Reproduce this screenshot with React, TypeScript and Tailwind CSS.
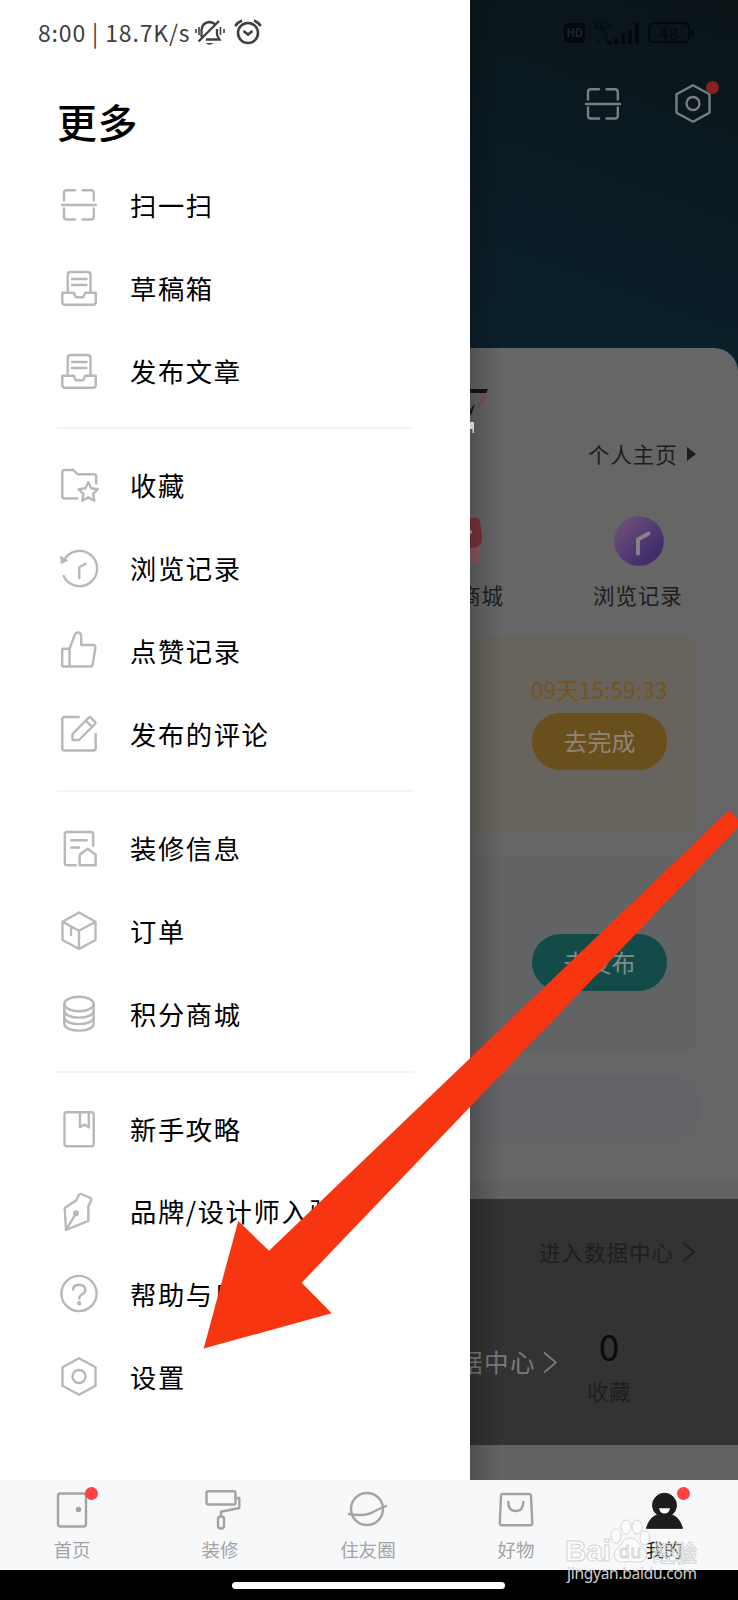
import type { ReactNode } from "react";

const HEX = "M20 1.2 L36.5 10.2 V28.8 L20 37.8 L3.5 28.8 V10.2 Z";

const icons: Record<string, ReactNode> = {
  scan: (
    <>
      <path d="M5 15.5 V8 Q5 5.3 7.7 5.3 H16 M23.5 5.3 H32 Q34.8 5.3 34.8 8 V15.5" />
      <path d="M5 23.5 V31.8 Q5 34.5 7.7 34.5 H16 M23.5 34.5 H32 Q34.8 34.5 34.8 31.8 V23.5 M3 20 H37" />
    </>
  ),
  inbox: (
    <>
      <path d="M8.7 24 V7 Q8.7 4 11.7 4 H28.5 Q31.5 4 31.5 7 V24 M13 11 H27.5 M13 17 H27.5" />
      <path d="M3.3 24.7 H14.8 L16.8 29.2 H24.2 L26.2 24.7 H36.8 V34 Q36.8 36.8 34 36.8 H6 Q3.3 36.8 3.3 34 Z" />
    </>
  ),
  folder: (
    <>
      <path d="M18.5 32.5 H5.5 Q3.3 32.5 3.3 30.3 V6 Q3.3 4 5.3 4 H14.5 L18.5 8.3 H35 Q37.2 8.3 37.2 10.5 V17.5" />
      <path d="M29.3 16.2 L32.2 22.3 L39 23.2 L34 27.8 L35.3 34.8 L29.3 31.4 L23.2 34.8 L24.5 27.8 L19.5 23.2 L26.4 22.3 Z" />
    </>
  ),
  history: (
    <>
      <path d="M4.6 28 A17.6 17.6 0 1 0 5 12.2" />
      <path d="M2 8.5 L8.5 12.5 L2.5 15.5 Z" fill="currentColor" strokeWidth="1" />
      <path d="M26.5 15.7 L20.3 19.3 V30" />
    </>
  ),
  like: (
    <path d="M4.5 17.7 H10.5 V35.5 H4.5 Q3.2 35.5 3.2 34 V19 Q3.2 17.7 4.5 17.7 Z M10.5 17.7 L15 6 Q16.5 1.2 19 1.4 Q22.2 1.7 22.2 5 V14 H34 Q36.8 14 36.3 17 L33.8 33 Q33.4 35.5 31 35.5 H10.5" />
  ),
  edit: (
    <>
      <path d="M19.7 3 H5.5 Q3.3 3 3.3 5.2 V34.3 Q3.3 36.5 5.5 36.5 H34.5 Q36.7 36.5 36.7 34.3 V20" />
      <path d="M13.5 26 V20 L29.7 3.7 Q30.8 2.8 31.8 3.7 L36 7.8 Q37 9 36 10 L20 26 Z M27 6.8 L33 12.8" />
    </>
  ),
  house: (
    <>
      <path d="M34.2 16.7 V5.2 Q34.2 3 32 3 H8 Q5.8 3 5.8 5.2 V34 Q5.8 36.3 8 36.3 H16.7 M12.3 11.3 H27.7 M12.3 18.5 H20" />
      <path d="M20.7 36.3 V25.8 L28.7 19.8 L36.7 25.8 V36.3 Z" />
    </>
  ),
  box: (
    <path d="M20 1.5 L36.5 10.7 V29 L20 38 L3.5 29 V10.7 Z M3.5 10.7 L20 19.8 L36.5 10.7 M20 19.8 V38 M12 15.5 V24" />
  ),
  coins: (
    <>
      <ellipse cx="20" cy="10" rx="14.7" ry="7.2" />
      <path d="M5.3 10 V29.5 C5.3 39 34.7 39 34.7 29.5 V10" />
      <path d="M5.3 16.5 C5.3 26 34.7 26 34.7 16.5 M5.3 23 C5.3 32.5 34.7 32.5 34.7 23" />
    </>
  ),
  book: (
    <>
      <rect x="5.5" y="3.2" width="29.2" height="34" rx="2.2" />
      <path d="M21 3.2 V18.3 L25.4 15.5 L29.8 18.3 V3.2" />
    </>
  ),
  pen: (
    <>
      <path d="M7 37.8 L5.7 16 L17 8.5 L20 2.8 Q20.8 1.5 22.3 2 L31.5 6 Q32.8 6.8 32.2 8 L29.3 14.5 V29 Z M7 37.8 L17 21.3" />
      <circle cx="17" cy="21.3" r="1.8" fill="currentColor" />
    </>
  ),
  help: (
    <>
      <circle cx="20" cy="19.5" r="17.6" />
      <path d="M14 15.5 Q14.5 10.8 20 10.8 Q26.3 11 26.3 16 Q26.3 18.7 23 20.5 Q20.2 22 20.2 24.5" />
      <circle cx="20.2" cy="29.3" r="1" fill="currentColor" />
    </>
  ),
  settings: (
    <>
      <path d={HEX} />
      <circle cx="20" cy="19.5" r="6.5" />
    </>
  ),
};

function Icon({ name, className }: { name: string; className?: string }) {
  return (
    <svg
      viewBox="0 0 40 40"
      fill="none"
      stroke="currentColor"
      strokeWidth="2.4"
      strokeLinecap="round"
      strokeLinejoin="round"
      className={`size-10 shrink-0 overflow-visible ${className ?? ""}`}
    >
      {icons[name]}
    </svg>
  );
}

const groups = [
  [
    ["scan", "扫一扫"],
    ["inbox", "草稿箱"],
    ["inbox", "发布文章"],
  ],
  [
    ["folder", "收藏"],
    ["history", "浏览记录"],
    ["like", "点赞记录"],
    ["edit", "发布的评论"],
  ],
  [
    ["house", "装修信息"],
    ["box", "订单"],
    ["coins", "积分商城"],
  ],
  [
    ["book", "新手攻略"],
    ["pen", "品牌/设计师入驻"],
    ["help", "帮助与反馈"],
    ["settings", "设置"],
  ],
];

function Drawer() {
  return (
    <aside className="w-[470px] shrink-0 bg-white">
      <div className="flex h-[65px] items-center pl-[38px] text-[#3f3f3f]">
        <span className="w-[155px] pb-[1px] text-[23px] tracking-[0.85px] whitespace-nowrap">8:00 | 18.7K/s</span>
        <svg width="32" height="28" viewBox="0 0 32 28" fill="none" stroke="currentColor" strokeWidth="2" className="-mt-[2px]">
          <path d="M8.5 19 V12 Q9 5 16 4 Q20 4 22 6.5 M24 11 V17 L26.5 21.5 H13 M5.5 23.5 L26 3" strokeWidth="2.3" />
          <path d="M12.5 25 H20.5 Q16.5 28.5 12.5 25 Z" fill="currentColor" stroke="none" />
          <path d="M3 11 V15 M6 9 V17 M27.5 9 V17 M31 11 V15" strokeWidth="1.6" />
        </svg>
        <svg width="28" height="28" viewBox="0 0 28 28" fill="none" stroke="currentColor" strokeWidth="2.6" className="-mt-[2px] ml-[9px]">
          <circle cx="14" cy="15" r="10" />
          <path d="M9.5 13 L14 16.5 L18.5 13 M1.2 8 Q4 4 8 2.5 M26.8 8 Q24 4 20 2.5" />
        </svg>
      </div>
      <h1 className="flex h-[99px] items-center pl-[57px] pt-[13px] text-[40px] font-medium tracking-[0.5px] text-black">更多</h1>
      <nav>
        {groups.map((group, i) => (
          <div key={i}>
            {i > 0 && <div className="my-[15px] ml-[57px] h-[2px] w-[357px] bg-[#f4f4f4]" />}
            {group.map(([icon, label]) => (
              <div key={label} className="flex h-[82.75px] items-center pl-[59px]">
                <Icon name={icon} className="text-[#b8b8b8]" />
                <span className="-mt-[1px] ml-[31px] text-[26.3px] tracking-[1.6px] whitespace-nowrap text-black">{label}</span>
              </div>
            ))}
          </div>
        ))}
      </nav>
    </aside>
  );
}

function StatusIcons() {
  return (
    <div className="flex h-[65px] items-center pl-[94px] text-[#03090c]">
      <span className="flex h-5 w-[21px] items-center justify-center rounded-[4px] bg-[#03090c] text-[11px] font-bold text-[#1c272d]">HD</span>
      <svg width="48" height="24" viewBox="0 0 48 24" fill="currentColor" className="ml-2 overflow-visible">
        <text x="1" y="9" fontSize="10" className="font-medium">4G+</text>
        <text x="1" y="21" fontSize="8">↓↑</text>
        <path d="M14 20 h5 v3 h-5z M21 17 h4 v6 h-4z M28 13 h4 v10 h-4z M35 9 h4 v14 h-4z M42 2 h4 v21 h-4z" />
      </svg>
      <span className="ml-[7px] flex h-[21px] w-[42px] items-center justify-center rounded-[6px] border-[2.5px] border-current text-[16px] font-medium tracking-[0.5px]">48</span>
      <span className="ml-[1px] h-[6px] w-[3px] bg-current" />
    </div>
  );
}

function Chevron({ className }: { className: string }) {
  return (
    <svg viewBox="0 0 14 22" fill="none" stroke="currentColor" strokeWidth="1.8" className={className}>
      <path d="M1 1 L13 11 L1 21" />
    </svg>
  );
}

// Profile page behind the drawer, dimmed by the scrim
function Profile() {
  return (
    <main className="relative w-[268px] shrink-0 overflow-hidden bg-[linear-gradient(200deg,#0b1417_0px,#0a1920_150px,#0b202b_380px)]">
      <StatusIcons />
      <div className="flex h-[283px] pl-[113px] pt-[19px] text-[#797e81]">
        <Icon name="scan" />
        <div className="relative ml-[50px] h-10">
          <Icon name="settings" />
          <span className="absolute -top-[3px] left-[33px] size-[13px] rounded-full bg-[#8a2021]" />
        </div>
      </div>

      <section className="h-[851px] rounded-tr-[24px] bg-[#666] text-[#1d1d1d]">
        <div className="flex h-[84px] pt-[40px]">
          <svg width="20" height="45" viewBox="0 0 20 45">
            <path d="M16.5 3 L8 20" fill="none" stroke="#8b4a55" strokeWidth="2.5" strokeDasharray="4 1" />
            <path d="M0 1 H18 L16 5 H0 Z M0 23 Q2 18 5 16 L1 27 H0Z" fill="#141414" />
            <path d="M0 34 H4 V45 H2.5 V41 H0Z" fill="#fff" />
          </svg>
        </div>
        <div className="flex h-[44px] items-center pl-[118px] text-[21.5px] tracking-[0.9px]">
          个人主页
          <span className="ml-[9px] h-0 w-0 border-y-[7px] border-l-[9px] border-y-transparent border-l-[#1d1d1d]" />
        </div>
        <div className="flex h-[159px] pt-[40px] text-[21.5px] leading-[30px] tracking-[0.9px] whitespace-nowrap">
          <div className="flex w-[34px] flex-col items-end">
            <svg width="34" height="50" viewBox="0 0 34 50">
              <path d="M0 27 H10 V44 Q9 47 6 47 H0Z" fill="#8d5860" />
              <path d="M0 2 H6 Q9 2 10 5 L12 21 Q13 32 0 32 Z" fill="#7a333b" />
              <circle cx="0" cy="16" r="2" fill="#aaa" />
            </svg>
            <span className="mt-[14px]">积分商城</span>
          </div>
          <div className="ml-[89px] flex flex-col items-center">
            <svg width="50" height="50" viewBox="0 0 50 50" className="ml-[2px]">
              <defs>
                <linearGradient id="clock" x1="0" y1="0" x2="1" y2="1">
                  <stop offset="0.1" stopColor="#6c4e78" />
                  <stop offset="1" stopColor="#34246b" />
                </linearGradient>
              </defs>
              <circle cx="25" cy="25" r="24.8" fill="url(#clock)" />
              <path d="M34.5 17.5 L24 23.5 V37.5" fill="none" stroke="#858189" strokeWidth="4" strokeLinecap="round" />
            </svg>
            <span className="mt-[14px]">浏览记录</span>
          </div>
        </div>

        <div className="flex h-[196px] w-[227px] flex-col rounded-r-[14px] bg-[#66645d] pl-[61px] pt-[39px]">
          <span className="h-[39px] text-[22.5px] leading-[30px] tracking-[0.15px] whitespace-nowrap text-[#77531a]">09天15:59:33</span>
          <button className="ml-[1px] h-[57px] w-[135px] rounded-full bg-[#694f1c] pb-[1px] text-[24px] text-[#8d8577]">去完成</button>
        </div>
        <div className="mt-[25px] h-[196px] w-[227px] rounded-r-[14px] bg-[#616365] pl-[62px] pt-[78px]">
          <button className="h-[57px] w-[135px] rounded-full bg-[#134b49] pb-[1px] text-[24px] text-[#7c8f8d]">去发布</button>
        </div>
        <div className="mt-[23px] h-[67px] w-[231px] rounded-r-full bg-[#626467]" />
        <div className="mt-[38px] h-[19px] bg-[#626262]" />
      </section>

      <section className="h-[246px] bg-[#333] text-[#1e1e1e]">
        <div className="flex items-center pl-[69px] pt-[36px] text-[21.5px] leading-[34px] tracking-[1px]">
          进入数据中心
          <Chevron className="ml-[8px] h-[20px] w-[13px]" />
        </div>
        <div className="flex pt-[49px]">
          <div className="flex w-[88px] items-center justify-end text-[24.5px] leading-[34px] tracking-[1.5px] text-[#7b7b7b]">
            <span className="whitespace-nowrap">进入数据中心</span>
            <Chevron className="ml-[7px] mr-[1px] h-[23px] w-[14px] shrink-0" />
          </div>
          <div className="ml-[29px] flex flex-col items-center">
            <span className="h-[58px] text-[37px] leading-[54px] text-[#0b0b0b]">0</span>
            <span className="text-[21.5px] leading-[30px] tracking-[0.5px]">收藏</span>
          </div>
        </div>
      </section>
      <section className="h-[35px] bg-[#636363]" />
      <div className="absolute inset-y-0 left-0 w-[32px] bg-gradient-to-r from-black/20 to-transparent" />
    </main>
  );
}

const tabs = [
  {
    label: "首页",
    dot: true,
    icon: (
      <>
        <rect x="6" y="3.5" width="28" height="33" rx="2.5" />
        <circle cx="26.5" cy="19.5" r="1.6" fill="currentColor" />
      </>
    ),
  },
  {
    label: "装修",
    icon: <path d="M8.5 1.3 H34 Q35.5 1.3 35.5 3 V12.5 Q35.5 14.5 34 14.5 H8.5 Q6.5 14.5 6.5 12.5 V3 Q6.5 1.3 8.5 1.3 Z M35.5 8 H39.3 V18 L21 21.7 V26.5 M21 26.5 Q24 26.5 24 29 V36 Q24 38.5 21 38.5 Q18 38.5 18 36 V29 Q18 26.5 21 26.5 Z" />,
  },
  {
    label: "住友圈",
    icon: (
      <>
        <circle cx="19" cy="19" r="16" />
        <path d="M1 24 Q17 27 26 21.5 Q32 18.5 38 16" />
      </>
    ),
  },
  {
    label: "好物",
    icon: <path d="M6.5 4 H33 Q34.8 4 35 6 L36.3 33 Q36.3 35.3 34 35.3 H6 Q3.7 35.3 3.8 33 L5 6 Q5 4 6.5 4 Z M12.3 12 Q12.3 21 19.8 21 Q27.3 21 27.3 12" />,
  },
  {
    label: "我的",
    dot: true,
    active: true,
    icon: (
      <>
        <path d="M2.5 38 Q6 26.5 13.5 25 A12 12 0 1 1 27.5 25 Q35 26.5 38.5 38 Z" fill="currentColor" strokeWidth="1" />
        <path d="M15 18.2 H26 Q25 23.5 20.5 23.5 Q16 23.5 15 18.2 Z" fill="#fff" stroke="none" />
      </>
    ),
  },
];

function TabBar() {
  return (
    <nav className="flex h-[90px] justify-between bg-[#f7f8fa] pl-[35px] pr-[37px] pt-[10px]">
      {tabs.map((tab) => (
        <div
          key={tab.label}
          className={`relative flex w-[74px] flex-col items-center ${tab.active ? "text-[#1d1d1d]" : "text-[#a3a3a3]"}`}
        >
          <svg viewBox="0 0 40 40" fill="none" stroke="currentColor" strokeWidth="2.4" strokeLinejoin="round" strokeLinecap="round" className="size-10 overflow-visible">
            {tab.icon}
          </svg>
          <span className="mt-[5px] text-[18.5px] leading-[28px] whitespace-nowrap">{tab.label}</span>
          {tab.dot && <span className="absolute -top-[3px] left-[50px] size-[13px] rounded-full bg-[#ff4141]" />}
        </div>
      ))}
    </nav>
  );
}

function Watermark() {
  return (
    <svg width="140" height="70" viewBox="0 0 140 70" className="absolute left-[562px] top-[1516px]">
      <g fill="#fff" fillOpacity="0.6" stroke="#d4d4d4" strokeWidth="1">
        <text x="3" y="45" fontSize="30" textLength="46" className="font-['Liberation_Sans'] font-bold">Bai</text>
        <ellipse cx="54" cy="20" rx="5" ry="7" />
        <ellipse cx="64" cy="11" rx="5" ry="7" />
        <ellipse cx="75" cy="11" rx="5" ry="7" />
        <ellipse cx="83" cy="22" rx="5" ry="7" />
        <path d="M68 22 Q74 22 78 29 Q86 35 84 41 Q82 47 74 46 Q68 45 62 46 Q54 47 52 40 Q52 34 59 29 Q62 22 68 22 Z" />
        <text x="57" y="42" fontSize="19" textLength="22" className="font-['Liberation_Sans']">du</text>
        <text x="91" y="45" fontSize="22" textLength="44" fillOpacity="0.2" className="font-bold">经验</text>
      </g>
      <text x="5" y="63" fontSize="15.5" textLength="130" fill="#d0d0d0" className="font-['Noto_Sans']">jingyan.baidu.com</text>
    </svg>
  );
}

export default function App() {
  return (
    <div className="relative h-[1600px] w-[738px] overflow-hidden bg-black font-['Noto_Sans_CJK_SC',sans-serif]">
      <div className="flex h-[1480px] overflow-hidden">
        <Drawer />
        <Profile />
      </div>
      <TabBar />
      <div className="flex h-[30px] items-center justify-center pr-[1px]">
        <span className="h-[7px] w-[273px] rounded-full bg-white" />
      </div>

      {/* Pointer to the settings entry */}
      <svg width="738" height="1600" viewBox="0 0 738 1600" className="absolute left-0 top-0">
        <path d="M203.7 1348.5 L238.3 1221 L269 1250.7 L729 810.3 L742 823 L301.7 1282.7 L331.7 1313.3 Z" fill="#f73510" />
      </svg>
      <Watermark />
    </div>
  );
}
